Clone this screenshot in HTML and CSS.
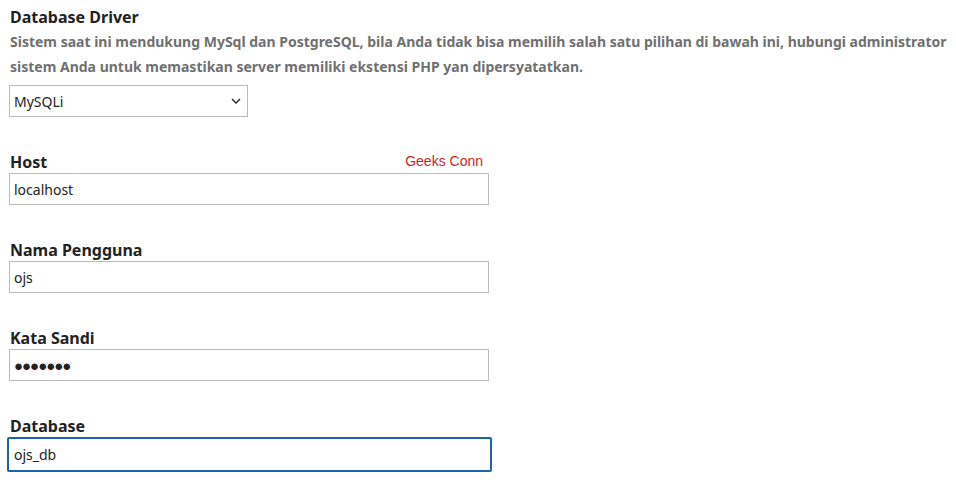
FILE: index.html
```html
<!DOCTYPE html>
<html lang="id">
<head>
  <meta charset="UTF-8" />
  <title>Instalasi - Database</title>
  <link rel="stylesheet" href="styles.css">
</head>
<body>
  <div class="container">
    <div class="field driver">
      <h3>Database Driver</h3>
      <p class="desc">Sistem saat ini mendukung MySql dan PostgreSQL, bila Anda tidak bisa memilih salah satu pilihan di bawah ini, hubungi administrator sistem Anda untuk memastikan server memiliki ekstensi PHP yan dipersyatatkan.</p>
      <div class="select-wrap">
        <span class="select-value">MySQLi</span>
        <svg class="chevron" width="10" height="6" viewBox="0 0 10 6"><path d="M1 1l4 4 4-4" fill="none" stroke="#333" stroke-width="1.5"/></svg>
      </div>
    </div>

    <div class="field">
      <div class="label-row">
        <label>Host</label>
        <span class="badge">Geeks Conn</span>
      </div>
      <div class="input">localhost</div>
    </div>

    <div class="field">
      <label>Nama Pengguna</label>
      <div class="input">ojs</div>
    </div>

    <div class="field">
      <label>Kata Sandi</label>
      <div class="input password">&#9679;&#9679;&#9679;&#9679;&#9679;&#9679;&#9679;</div>
    </div>

    <div class="field">
      <label>Database</label>
      <div class="input focused">ojs_db</div>
    </div>
  </div>
</body>
</html>
```

FILE: styles.css
```css
body {
  margin: 0;
  background: #fff;
  font-family: "Noto Sans", sans-serif;
  color: #222;
}
.container {
  padding: 5px 9px 0 9px;
}
h3 {
  margin: 0 0 0 1px;
  font-size: 16px;
  font-weight: bold;
  line-height: 24px;
}
.desc {
  margin: 0 0 0 1px;
  font-size: 14px;
  font-weight: bold;
  line-height: 25px;
  color: #707070;
}
.select-wrap {
  margin-top: 6px;
  width: 228px;
  height: 30px;
  border: 1px solid #bbb;
  display: flex;
  align-items: center;
  justify-content: space-between;
  padding: 0 5px 0 4px;
  box-sizing: content-box;
  font-size: 14px;
}
.chevron {
  margin-right: 1px;
}
.field {
  margin-bottom: 34px;
}
.driver {
  margin-bottom: 34px;
}
.label-row {
  display: flex;
  justify-content: space-between;
  width: 474px;
}
label {
  display: block;
  margin-left: 1px;
  font-size: 16px;
  font-weight: bold;
  line-height: 22px;
}
.badge {
  font-family: "Liberation Sans", Arial, sans-serif;
  font-size: 14px;
  color: #cc1f1f;
  line-height: 20px;
}
.input {
  width: 469px;
  height: 30px;
  border: 1px solid #bbb;
  padding: 0 5px 0 4px;
  display: flex;
  align-items: center;
  font-size: 14px;
}
.password {
  font-size: 15px;
  letter-spacing: -1px;
}
.focused {
  border: 2px solid #1b64aa;
  border-radius: 2px;
  margin-left: -2px;
  width: 471px;
  height: 31px;
  padding-left: 5px;
}
```
